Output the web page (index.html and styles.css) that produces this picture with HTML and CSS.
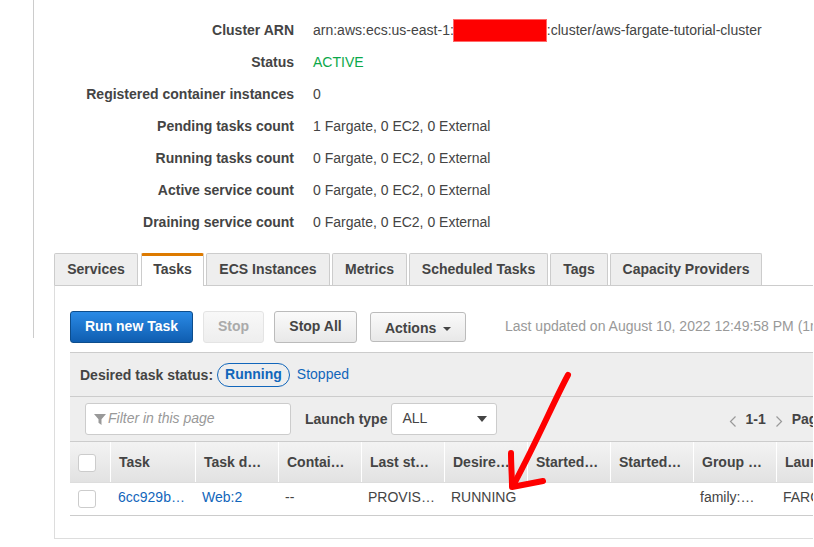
FILE: index.html
```html
<!DOCTYPE html>
<html lang="en">
<head>
<meta charset="utf-8">
<title>Cluster</title>
<link rel="stylesheet" href="styles.css">
</head>
<body>
<div class="page">
  <div class="rail"></div>
  <dl class="summary">
    <div class="row"><dt>Cluster ARN</dt><dd>arn:aws:ecs:us-east-1:<span class="redact"></span>:cluster/aws-fargate-tutorial-cluster</dd></div>
    <div class="row"><dt>Status</dt><dd class="active">ACTIVE</dd></div>
    <div class="row"><dt>Registered container instances</dt><dd>0</dd></div>
    <div class="row"><dt>Pending tasks count</dt><dd>1 Fargate, 0 EC2, 0 External</dd></div>
    <div class="row"><dt>Running tasks count</dt><dd>0 Fargate, 0 EC2, 0 External</dd></div>
    <div class="row"><dt>Active service count</dt><dd>0 Fargate, 0 EC2, 0 External</dd></div>
    <div class="row"><dt>Draining service count</dt><dd>0 Fargate, 0 EC2, 0 External</dd></div>
  </dl>
  <div class="tabs-area">
    <div class="tabs">
      <a class="tab tab-services">Services</a>
      <a class="tab tab-active">Tasks</a>
      <a class="tab tab-ecs">ECS Instances</a>
      <a class="tab tab-metrics">Metrics</a>
      <a class="tab tab-sched">Scheduled Tasks</a>
      <a class="tab tab-tags">Tags</a>
      <a class="tab tab-cap">Capacity Providers</a>
    </div>
    <section class="panel">
      <div class="actions">
        <button class="btn btn-primary">Run new Task</button>
        <button class="btn btn-disabled">Stop</button>
        <button class="btn btn-stopall">Stop All</button>
        <button class="btn btn-menu">Actions <span class="caret-sm"></span></button>
        <span class="updated">Last updated on August 10, 2022 12:49:58 PM (1m ago)</span>
      </div>
      <div class="strip">
        <div class="status-row">
          <span class="status-label">Desired task status:</span>
          <a class="pill">Running</a>
          <a class="link stopped">Stopped</a>
        </div>
        <div class="filter-row">
          <div class="filter">
            <svg class="funnel" width="12" height="12" viewBox="0 0 12 12"><path d="M0 1h12L7.5 6.2V12L4.5 9.8V6.2z" fill="#999"/></svg>
            <span class="filter-text">Filter in this page</span>
          </div>
          <span class="launch-label">Launch type</span>
          <div class="select"><span class="select-value">ALL</span><span class="caret-lg"></span></div>
          <div class="pager">
            <svg class="chev" width="8" height="12" viewBox="0 0 8 12"><path d="M6.5 1.5 1.5 6.5l5 5" fill="none" stroke="#999" stroke-width="1.2"/></svg>
            <b class="pager-count">1-1</b>
            <svg class="chev" width="8" height="12" viewBox="0 0 8 12"><path d="M1.5 1.5l5 5-5 5" fill="none" stroke="#999" stroke-width="1.2"/></svg>
            <b class="pager-page">Page</b>
          </div>
        </div>
      </div>
      <div class="table">
        <div class="thead">
          <div class="cell cell-check"><span class="check"></span></div>
          <div class="cell">Task</div>
          <div class="cell">Task d…</div>
          <div class="cell">Contai…</div>
          <div class="cell">Last st…</div>
          <div class="cell">Desire…</div>
          <div class="cell">Started…</div>
          <div class="cell">Started…</div>
          <div class="cell">Group …</div>
          <div class="cell">Launch</div>
        </div>
        <div class="tbody">
          <div class="cell cell-check"><span class="check"></span></div>
          <div class="cell cell-id"><a class="link">6cc929b…</a></div>
          <div class="cell"><a class="link">Web:2</a></div>
          <div class="cell">--</div>
          <div class="cell">PROVIS…</div>
          <div class="cell">RUNNING</div>
          <div class="cell"></div>
          <div class="cell"></div>
          <div class="cell">family:…</div>
          <div class="cell">FARGATE</div>
        </div>
      </div>
    </section>
  </div>
</div>
<svg class="arrow" width="814" height="547" viewBox="0 0 814 547">
  <path d="M568 375C553 403 540 435 514 484" fill="none" stroke="#fe0000" stroke-width="6" stroke-linecap="round"/>
  <path d="M511 453C511 465 512 476 512 487L543 481" fill="none" stroke="#fe0000" stroke-width="6" stroke-linecap="round" stroke-linejoin="round"/>
</svg>
</body>
</html>
```
FILE: styles.css
```css
* { box-sizing: border-box; }
html, body { margin: 0; padding: 0; background: #fff; }
body {
  width: 814px;
  height: 547px;
  overflow: hidden;
  position: relative;
  font-family: "Liberation Sans", Arial, sans-serif;
  font-size: 14px;
  color: #444;
}
.page {
  display: grid;
  grid-template-columns: 33px 21px 759px;
  grid-template-rows: 253px auto;
}
.rail {
  grid-column: 2;
  grid-row: 1 / 3;
  height: 338px;
  border-left: 1px solid #ccc;
}
.summary {
  grid-column: 1 / 4;
  grid-row: 1;
  margin: 0;
  padding-top: 14px;
}
.row { display: flex; height: 32px; align-items: center; }
.row dt { width: 294px; text-align: right; font-weight: 700; }
.row dd { margin: 0 0 0 19px; white-space: nowrap; line-height: 32px; height: 32px; }
.row dd.active { color: #0ba84a; }
.redact {
  display: inline-block;
  width: 94px;
  height: 23px;
  margin-left: -1px;
  vertical-align: -7px;
  background: #fe0000;
  border: 1px solid #ff6a6a;
}
.tabs-area { grid-column: 3; grid-row: 2; min-width: 0; }
.tabs { display: flex; height: 33px; position: relative; z-index: 1; }
.tab {
  flex: none;
  height: 32px;
  margin-right: 2px;
  border: 1px solid #ccc;
  border-bottom: 0;
  border-radius: 2px 2px 0 0;
  background: #eee;
  font-weight: 700;
  line-height: 30px;
  text-align: center;
}
.tab-services { width: 84px; margin-right: 3px; }
.tab-active {
  width: 63px;
  height: 33px;
  background: #fff;
  border-top: 3px solid #dd7a00;
  line-height: 26px;
}
.tab-ecs { width: 124px; }
.tab-metrics { width: 75px; }
.tab-sched { width: 139px; }
.tab-tags { width: 58px; }
.tab-cap { width: 152px; }
.panel {
  height: 254px;
  margin-top: -1px;
  padding: 25px 0 0 15px;
  border: solid #ddd;
  border-width: 1px 0 1px 1px;
  border-top-color: #ccc;
  background: #fff;
  overflow: hidden;
}
.actions { display: flex; align-items: flex-start; height: 41px; }
.btn {
  flex: none;
  height: 32px;
  padding: 0 0 2px;
  border: 1px solid #bbb;
  border-radius: 3px;
  font: 700 14px "Liberation Sans", Arial, sans-serif;
  color: #444;
  background: linear-gradient(#fafafa, #e8e8e8);
}
.btn-primary {
  width: 123px;
  margin-right: 10px;
  color: #fff;
  border-color: #0d4d8c;
  background: linear-gradient(#2a8ae6, #0f5db0);
}
.btn-disabled {
  width: 61px;
  margin-right: 10px;
  color: #aaa;
  border-color: #e4e4e4;
  background: linear-gradient(#f8f8f8, #eeeeee);
}
.btn-stopall { width: 83px; margin-right: 13px; }
.btn-menu { width: 96px; margin-top: 1px; height: 30px; padding: 1px 0 0; }
.caret-sm {
  display: inline-block;
  margin-left: 3px;
  vertical-align: 2px;
  border: 4px solid transparent;
  border-top-color: #444;
  border-bottom: 0;
}
.updated { flex: none; margin-left: 39px; line-height: 31px; color: #999; white-space: nowrap; }
.strip {
  border-top: 1px solid #ccc;
  background: #eee;
}
.status-row {
  display: flex;
  align-items: center;
  height: 44px;
  padding-left: 10px;
  border-bottom: 1px solid #ccc;
}
.status-label { font-weight: 700; }
.pill {
  height: 24px;
  margin-left: 4px;
  padding: 0 7px;
  border: 1px solid #1166bb;
  border-radius: 12px;
  font-weight: 700;
  line-height: 21px;
  color: #1166bb;
}
.link { color: #1166bb; }
.stopped { margin-left: 7px; margin-top: -2px; }
.filter-row {
  display: flex;
  align-items: center;
  height: 44px;
  padding: 0 0 0 15px;
}
.filter {
  flex: none;
  display: flex;
  align-items: center;
  width: 206px;
  height: 32px;
  padding-left: 8px;
  background: #fff;
  border: 1px solid #ccc;
  border-radius: 3px;
}
.funnel { margin-right: 2px; margin-top: -1px; }
.filter-text { font-style: italic; color: #999; margin-top: -2px; }
.launch-label { flex: none; margin-left: 14px; font-weight: 700; white-space: nowrap; }
.select {
  flex: none;
  display: flex;
  align-items: center;
  justify-content: space-between;
  width: 106px;
  height: 32px;
  margin-left: 4px;
  padding: 0 9px 0 10px;
  background: #fff;
  border: 1px solid #ccc;
  border-radius: 3px;
}
.select-value { margin-top: -2px; }
.caret-lg {
  border: 5.5px solid transparent;
  border-top: 6px solid #444;
  border-bottom: 0;
}
.pager { flex: none; display: flex; align-items: center; margin-left: 232px; white-space: nowrap; }
.chev { margin-top: 3px; }
.pager-count { margin-left: 8px; margin-right: 9px; }
.pager-page { margin-left: 9px; }
.table { width: 743px; overflow: hidden; }
.thead, .tbody { display: grid; grid-template-columns: 40px 85px repeat(8, 83px); }
.thead {
  height: 42px;
  border-top: 1px solid #ccc;
  border-bottom: 1px solid #ddd;
  background: linear-gradient(#f3f3f3, #e2e2e2);
  font-weight: 700;
}
.thead .cell { border-left: 1px solid #fff; padding: 0 8px; line-height: 40px; white-space: nowrap; }
.thead .cell-check { border-left: 0; padding-top: 2px; }
.tbody { height: 33px; border-bottom: 1px solid #ccc; }
.tbody .cell { padding: 0 7px; line-height: 29px; white-space: nowrap; }
.tbody .cell-id { padding-left: 8px; }
.tbody .cell-check, .thead .cell-check { display: flex; align-items: center; padding-left: 8px; padding-right: 0; }
.check {
  display: block;
  width: 18px;
  height: 18px;
  background: #fff;
  border: 1px solid #ccc;
  border-radius: 3px;
}
.arrow { position: absolute; left: 0; top: 0; pointer-events: none; }
```
